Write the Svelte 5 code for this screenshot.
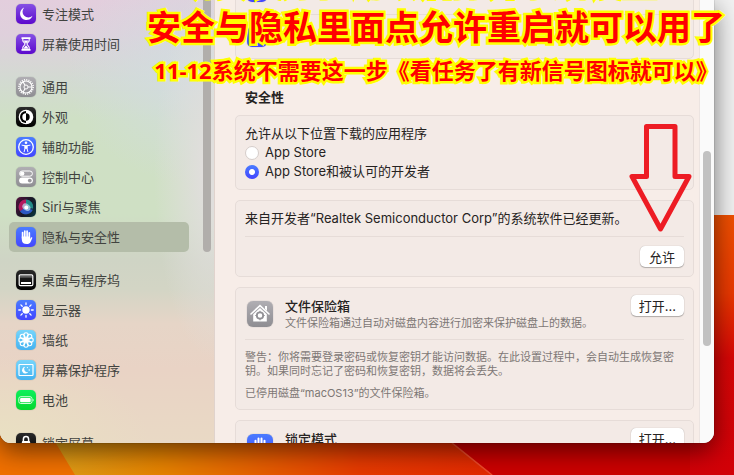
<script>
  const groups = [
    [
      {
        label: '专注模式', tone: 'purple',
        art: '<path d="M8.2 3.6a6.4 6.4 0 1 0 8.3 8.2 5.7 5.7 0 0 1-8.3-8.2z" fill="#fff"/>'
      },
      {
        label: '屏幕使用时间', tone: 'purple',
        art: '<path d="M5.5 3.3h9v1.6h-9zM5.5 15.1h9v1.6h-9z" fill="#fff"/><path d="M6.8 4.8v1.6c0 1.6 2.2 2.4 2.2 3.6s-2.2 2-2.2 3.6v1.6M13.2 4.8v1.6c0 1.6-2.2 2.4-2.2 3.6s2.2 2 2.2 3.6v1.6" fill="none" stroke="#fff" stroke-width="1.1"/><path d="M7.4 6.6h5.2L10 9.6zM10 11.2l2.8 3.6H7.2z" fill="#fff"/>'
      }
    ],
    [
      {
        label: '通用', tone: 'gray',
        art: '<circle cx="10" cy="10" r="7.2" fill="none" stroke="#fff" stroke-width="1.5" stroke-dasharray="1.1 1.16"/><circle cx="10" cy="10" r="6" fill="none" stroke="#fff" stroke-width="1.1"/><circle cx="10" cy="10" r="2" fill="none" stroke="#fff"/><path d="M12 10h4M9 8.3L7 4.8M9 11.7l-2 3.5" stroke="#fff" stroke-width="1.1"/>'
      },
      {
        label: '外观', tone: 'black',
        art: '<circle cx="10" cy="10" r="7.3" fill="#fff"/><path d="M10 4a6 6 0 0 0 0 12z"/><path d="M10 6.3a3.7 3.7 0 0 0 0 7.4z" fill="#fff"/><path d="M10 6.3a3.7 3.7 0 0 1 0 7.4z"/>'
      },
      {
        label: '辅助功能', tone: 'blue',
        art: '<circle cx="10" cy="10" r="7.3" fill="none" stroke="#fff" stroke-width="1.3"/><circle cx="10" cy="5.8" r="1.3" fill="#fff"/><path d="M6 8.2l3 .5v2.6L8.100 14.800M14 8.200l-3 .5v2.600L11.900 14.800" fill="none" stroke="#fff" stroke-width="1" stroke-linecap="round"/><path d="M8.600 8.200h2.800v3.600H8.600z" fill="#fff"/>'
      },
      {
        label: '控制中心', tone: 'gray',
        art: '<rect x="3.6" y="4" width="12.8" height="5.2" rx="2.6" fill="none" stroke="#fff"/><circle cx="6.2" cy="6.6" r="2.2" fill="#fff"/><rect x="3.1" y="10.6" width="13.8" height="6" rx="3" fill="#fff"/><circle cx="13.8" cy="13.6" r="1.9" fill="#98969b"/>'
      },
      {
        label: 'Siri与聚焦', tone: 'siri',
        art: '<circle cx="10" cy="10" r="7.4" fill="#1c3a55"/><path d="M10 2.6a7.4 7.4 0 0 0-6 11.7C7 13 9 11 10 10z" fill="#b3195e"/><path d="M4 14.3a7.4 7.4 0 0 0 12.6-1L10 10z" fill="#2b58c4"/><path d="M10 2.6a7.4 7.4 0 0 1 7.1 9L10 10z" fill="#238a86"/><ellipse cx="10.4" cy="10.2" rx="4.4" ry="3.2" transform="rotate(35 10.4 10.2)" fill="#b7d9ee" opacity=".75"/><circle cx="10.3" cy="10.4" r="2" fill="#fff"/>'
      },
      {
        label: '隐私与安全性', tone: 'blue', current: true,
        art: '<path d="M6.6 11V5.6M8.8 10V4M11.1 10V4.2M13.3 11V5.8" stroke="#fff" stroke-width="1.7" stroke-linecap="round"/><path d="M5.8 9.6h8.3v2.3l1-1.4c.5-.7 1.5-.2 1.2.6l-1.5 3.4c-.8 1.9-2.2 2.6-4.2 2.6-3 0-4.8-1.8-4.8-4.7z" fill="#fff"/>'
      }
    ],
    [
      {
        label: '桌面与程序坞', tone: 'black',
        art: '<rect x="3.2" y="4.8" width="13.6" height="10.8" rx="1.2" fill="none" stroke="#fff" stroke-width="1.2"/><path d="M4 6.2h12v1.4H4z" fill="#777"/><path d="M5 12h10v2H5z" fill="#fff"/>'
      },
      {
        label: '显示器', tone: 'blue',
        art: '<circle cx="10" cy="10" r="3.7" fill="#fff"/><path d="M10 2.8v1.8M10 15.4v1.8M2.8 10h1.8M15.4 10h1.8M4.9 4.9l1.3 1.3M13.8 13.8l1.3 1.3M4.9 15.1l1.3-1.3M13.8 6.2l1.3-1.3" stroke="#fff" stroke-width="1.3" stroke-linecap="round"/>'
      },
      {
        label: '墙纸', tone: 'sky',
        art: '<g fill="none" stroke="#fff" stroke-width="1.1"><circle cx="10" cy="5" r="2.2"/><circle cx="10" cy="15" r="2.2"/><circle cx="5" cy="10" r="2.2"/><circle cx="15" cy="10" r="2.2"/><circle cx="6.4" cy="6.4" r="2.2"/><circle cx="13.6" cy="6.4" r="2.2"/><circle cx="6.4" cy="13.6" r="2.2"/><circle cx="13.6" cy="13.6" r="2.2"/><circle cx="10" cy="10" r="2.2" fill="#fff"/></g>'
      },
      {
        label: '屏幕保护程序', tone: 'sky',
        art: '<rect x="3" y="4.5" width="14" height="11" rx=".8" fill="none" stroke="#fff" stroke-width="1.2"/><path d="M9.2 6.8a3.4 3.4 0 1 0 3.2 5 3 3 0 0 1-3.2-5z" fill="#fff"/><circle cx="13.2" cy="10" r=".7" fill="#fff"/><circle cx="11.4" cy="7.6" r=".6" fill="#fff"/>'
      },
      {
        label: '电池', tone: 'green',
        art: '<rect x="2.8" y="6.7" width="13.2" height="6.8" rx="2" fill="none" stroke="#d3ffdc"/><rect x="4.1" y="8" width="10.6" height="4.2" rx="1" fill="#fff"/><path d="M16.8 8.8c1 .2 1 2.4 0 2.6z" fill="#fff"/>'
      }
    ],
    [
      {
        label: '锁定屏幕', tone: 'black',
        art: '<rect x="5.8" y="8" width="8.4" height="8" rx="1.4" fill="#fff"/><path d="M7.4 9V6.2a2.6 2.6 0 0 1 5.2 0V9" fill="none" stroke="#fff" stroke-width="1.5"/>'
      }
    ]
  ];

  let source = $state('identified');
</script>

{#snippet icon(tone, art)}
  <span class="icon {tone}">
    <svg viewBox="0 0 20 20" aria-hidden="true">{@html art}</svg>
  </span>
{/snippet}

<div class="desktop">
  <svg class="wallpaper" viewBox="0 0 734 475" preserveAspectRatio="none" aria-hidden="true">
    <defs>
      <linearGradient id="ember" x1="0" x2="1">
        <stop offset="0" stop-color="#dba21c" />
        <stop offset=".28" stop-color="#e68200" />
        <stop offset=".7" stop-color="#e63a00" />
        <stop offset="1" stop-color="#e42800" />
      </linearGradient>
      <linearGradient id="edge" x1="0" y1="0" x2="0" y2="1">
        <stop offset="0" stop-color="#f05000" />
        <stop offset=".3" stop-color="#ea3800" />
        <stop offset=".55" stop-color="#d80606" />
        <stop offset="1" stop-color="#d20008" />
      </linearGradient>
    </defs>
    <path d="M0 0H734V475H0z" fill="#f07000" />
    <path d="M30 400L75 475H500L410 400z" fill="url(#ember)" />
    <path d="M410 408L493 475H734V408z" fill="#cc0000" />
    <path d="M452 443L492 475" stroke="#ee4a2c" stroke-width="1.5" />
    <path d="M690 215H734V475H690z" fill="url(#edge)" />
  </svg>
  <div class="behind"></div>

  <div class="window">
    <nav class="sidebar">
      {#each groups as group}
        <ul>
          {#each group as item}
            <li>
              <a href="#settings" class:current={item.current}>
                {@render icon(item.tone, item.art)}
                {item.label}
              </a>
            </li>
          {/each}
        </ul>
      {/each}
      <span class="thumb side"></span>
    </nav>

    <main>
      <section class="card">
        <div class="row">
          {@render icon('blue', '<path d="M5 15V10M10 15V5M15 15V8" stroke="#fff" stroke-width="2"/>')}
        </div>
        <div class="row">
          {@render icon('blue', '<path d="M4 8h3l8-4v12l-8-4H4z" fill="#fff"/>')}
        </div>
      </section>

      <h2>安全性</h2>

      <fieldset class="card sources" aria-labelledby="sources">
        <div class="line" id="sources">允许从以下位置下载的应用程序</div>
        <label class="line"><input type="radio" name="source" value="store" bind:group={source} />App Store</label>
        <label class="line"><input type="radio" name="source" value="identified" bind:group={source} />App Store和被认可的开发者</label>
      </fieldset>

      <section class="card">
        <p class="notice">来自开发者“Realtek Semiconductor Corp”的系统软件已经更新。</p>
        <div class="actions"><button type="button">允许</button></div>
      </section>

      <section class="card">
        <div class="feature">
          <span class="icon large gray">
            <svg viewBox="0 0 26 26" aria-hidden="true">
              <path d="M4 13L13 4.6 22 13" fill="none" stroke="#fff" stroke-width="1.6" stroke-linecap="round" />
              <path d="M18 5h2v5l-2-2zM6.2 13.2L13 7l6.8 6.2V20.500H6.200z" fill="#fff" />
              <circle cx="13" cy="14.500" r="3.200" fill="none" stroke="#929196" stroke-width="1.800" />
              <path d="M13 9.800v2M13 17.200v2M8.300 14.500h2M15.700 14.500h2" stroke="#929196" stroke-width="1.200" />
            </svg>
          </span>
          <div class="about">
            <h3>文件保险箱</h3>
            <p>文件保险箱通过自动对磁盘内容进行加密来保护磁盘上的数据。</p>
          </div>
          <button type="button">打开...</button>
        </div>
        <div class="notes">
          <p>警告：你将需要登录密码或恢复密钥才能访问数据。在此设置过程中，会自动生成恢复密钥。如果同时忘记了密码和恢复密钥，数据将会丢失。</p>
          <p>已停用磁盘“macOS13”的文件保险箱。</p>
        </div>
      </section>

      <section class="card">
        <div class="feature">
          <span class="icon large blue">
            <svg viewBox="0 0 26 26" aria-hidden="true">
              <path d="M8.500 14V6.800M11.500 13V4.500M14.500 13V4.500M17.500 14V6.800" stroke="#fff" stroke-width="2" stroke-linecap="round" />
              <path d="M7.500 12.500h11v4c0 3-2 5-5.500 5s-5.500-2-5.500-5z" fill="#fff" />
            </svg>
          </span>
          <div class="about">
            <h3>锁定模式</h3>
            <p>锁定模式是一种可选的极端保护模式。</p>
          </div>
          <button type="button">打开...</button>
        </div>
      </section>
    </main>

    <div class="track"><span class="thumb page"></span></div>
  </div>

  <svg class="arrow" viewBox="0 0 64 112" aria-hidden="true">
    <path d="M18.500 4.500H47V54.500H61L32.500 107 4 54.500H18.500z" fill="none" stroke="#ed1c24" stroke-width="5" stroke-linejoin="round" />
  </svg>

  <div class="caption">
    <p class="first">正确安装好驱动以后打开系统设置</p>
    <p>安全与隐私里面点允许重启就可以用了</p>
    <p class="small">11-12系统不需要这一步《看任务了有新信号图标就可以》</p>
  </div>
</div>

<style>
  :global(body) { margin: 0; overflow: hidden; }

  .desktop, .desktop * { box-sizing: border-box; }

  .desktop {
    position: relative;
    display: flex;
    height: 100vh;
    padding: 0 20px 32px 0;
    overflow: hidden;
    font: 13px/20px Inter, "Noto Sans CJK SC", sans-serif;
    color: #262322;
  }

  p, h2, h3, ul { margin: 0; padding: 0; }

  .wallpaper { position: absolute; inset: 0; width: 100%; height: 100%; }

  .behind {
    position: absolute;
    top: 0;
    right: 0;
    width: 60px;
    height: 215px;
    background: #f2f2f2;
  }

  .window {
    position: relative;
    display: flex;
    flex: 1;
    min-width: 0;
    overflow: hidden;
    border-radius: 0 0 11px 11px;
    background: #f7ede8;
    box-shadow: 0 0 1px rgba(0, 0, 0, .7), 0 8px 26px rgba(0, 0, 0, .55);
  }

  .sidebar {
    position: relative;
    display: flex;
    flex: 0 0 215px;
    flex-direction: column;
    gap: 13px;
    margin-top: -1px;
    padding: 0 25px 0 9px;
    border-right: 1px solid #e0d3cd;
    background:
      radial-gradient(ellipse 60px 190px at 100% 170px, #e0dedc 20%, #e0dedc00 100%),
      radial-gradient(ellipse 130px 110px at 92% 75px, #d2dce0 0%, #d2dce000 100%),
      radial-gradient(ellipse 150px 90px at 0% 445px, #e9e0c2 0%, #e9e0c200 100%),
      linear-gradient(#e3cedd 0, #dfd0dc 35px, #d3dad2 80px, #cfe0c5 120px, #cfe0c4 215px, #cfd4c5 262px, #d3d5c5 290px, #e6d5c7 325px, #e9d3c5 370px, #e9d9c5 443px);
  }

  .sidebar ul { list-style: none; }

  .sidebar a {
    display: flex;
    align-items: center;
    gap: 6px;
    height: 30px;
    padding: 0 7px;
    border-radius: 5px;
    color: #41433f;
    text-decoration: none;
    white-space: nowrap;
  }

  .sidebar a.current { background: #b4bda9; }

  .icon {
    flex: none;
    width: 20px;
    height: 20px;
    border-radius: 5px;
    box-shadow: 0 0 1px rgba(0, 0, 0, .4);
  }

  .icon svg { display: block; width: 100%; height: 100%; }

  .large { width: 26px; height: 26px; margin: 0 12px 0 2px; border-radius: 6px; }

  .purple { background: linear-gradient(#8550e4, #5c08cd); }
  .gray { background: linear-gradient(#b0aeb3, #8e8d92); }
  .black { background: linear-gradient(#2a2a2a, #000); }
  .blue { background: linear-gradient(#4a7cff, #4345ff); }
  .siri { background: linear-gradient(120deg, #56103c, #151726 55%, #0a3840); }
  .sky { background: linear-gradient(#76d5fb, #45b2f0); }
  .green { background: linear-gradient(#0cf05c, #06d72f); }

  .thumb { position: absolute; width: 8px; border-radius: 4px; }
  .side { top: -5px; right: 3px; height: 258px; background: #b1aeab; }
  .page { top: 34%; right: 3px; height: 195px; background: #c1c1c1; }

  .track {
    position: relative;
    flex: 0 0 15px;
    border-left: 1px solid #ece4e1;
    background: #fafafa;
  }

  main {
    display: flex;
    flex: 1;
    flex-direction: column;
    gap: 10px;
    min-width: 0;
    margin-top: -31px;
    padding: 0 5px 0 20px;
  }

  .card {
    flex: none;
    min-width: 0;
    margin: 0;
    padding: 0 9px;
    border: 1px solid #e6dcd8;
    border-radius: 5px;
    background: #f3eae6;
  }

  .row { display: flex; align-items: center; gap: 8px; height: 44px; padding-left: 2px; }
  .row + .row { border-top: 1px solid #e6dcd8; }

  h2 { margin-bottom: -2px; padding: 18px 10px 0; font-size: 13px; line-height: 20px; font-weight: 700; }

  .sources { padding: 8px 9px; }
  .line { display: flex; align-items: center; gap: 6px; line-height: 19px; }

  input {
    appearance: none;
    width: 14px;
    height: 14px;
    margin: 0;
    border: 1px solid #d5cdca;
    border-radius: 50%;
    background: #fff;
  }

  input:checked {
    border: 0;
    background: radial-gradient(circle, #fff 2.5px, transparent 3.5px), linear-gradient(#4a7cff, #4345ff);
  }

  .notice { line-height: 35px; border-bottom: 1px solid #e6dcd8; }
  .actions { display: flex; justify-content: flex-end; padding: 9px 0; }

  button {
    flex: none;
    min-width: 44px;
    height: 21px;
    padding: 0 8px;
    border: 0;
    border-radius: 5px;
    background: #fff;
    box-shadow: 0 0 1px rgba(0, 0, 0, .3), 0 1px 1px rgba(0, 0, 0, .25);
    color: #262322;
    font: inherit;
  }

  .feature { display: flex; align-items: center; height: 51px; }
  .feature button { align-self: flex-start; margin-top: 7px; }
  .about { flex: 1; min-width: 0; }
  h3 { font-size: 13px; line-height: 18px; font-weight: 500; }
  .about p { font-size: 11px; line-height: 16px; color: #7d7775; }

  .notes {
    display: flex;
    flex-direction: column;
    gap: 8px;
    padding: 10px 0 9px;
    border-top: 1px solid #e6dcd8;
    color: #7d7775;
    font-size: 11px;
    line-height: 14px;
  }

  .arrow { position: absolute; top: 122px; right: 42px; width: 64px; height: 112px; }

  .caption {
    position: absolute;
    top: -42px;
    left: 147px;
    color: #f00;
    font: 700 34px/45px "Noto Sans CJK SC", sans-serif;
    text-align: center;
    white-space: nowrap;
    -webkit-text-stroke: 5px #ff0;
    paint-order: stroke fill;
  }

  .first { text-align: left; }
  .small { font-family: "Open Sans", "Noto Sans CJK SC", sans-serif; font-size: 22px; }
</style>
